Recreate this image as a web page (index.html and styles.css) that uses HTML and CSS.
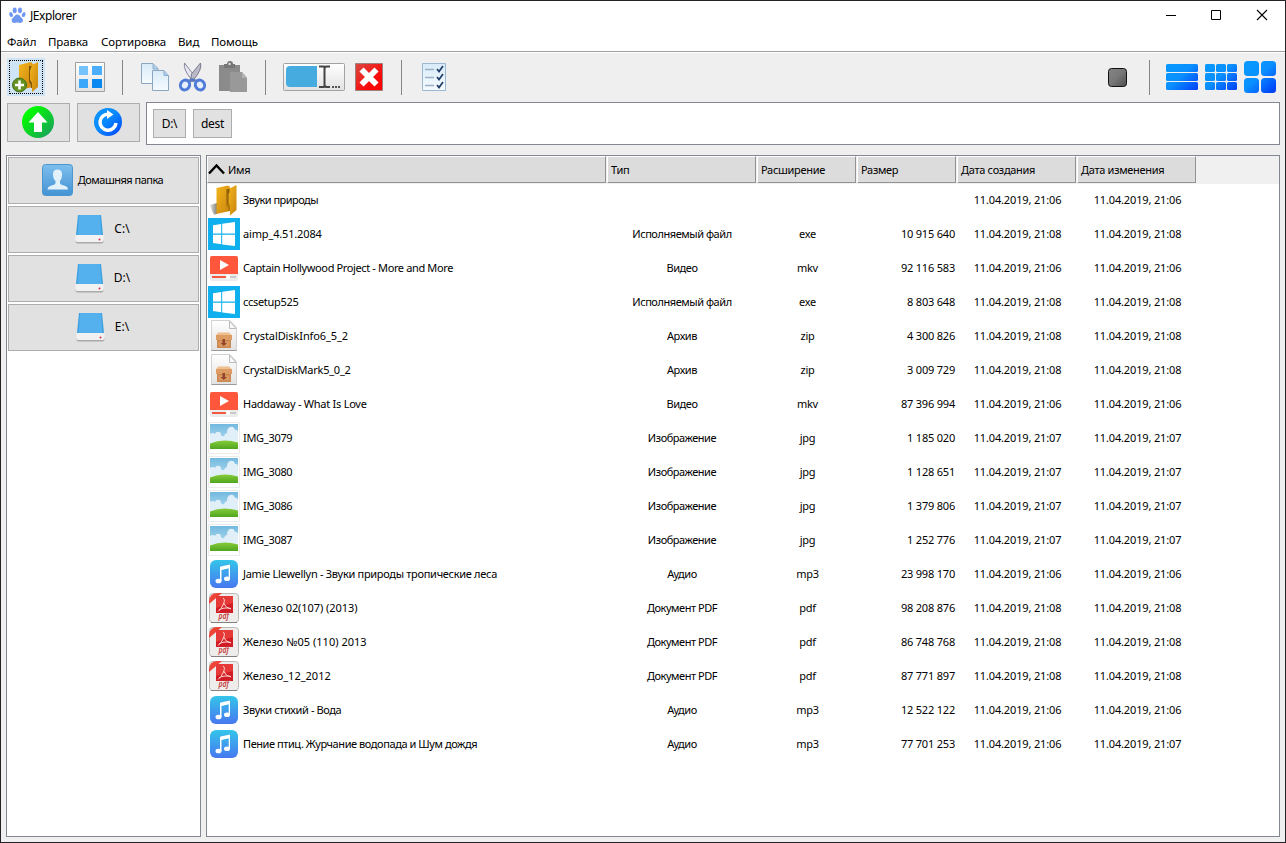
FILE: index.html
```html
<!DOCTYPE html>
<html lang="ru">
<head>
<meta charset="utf-8">
<title>JExplorer</title>
<link rel="stylesheet" href="styles.css">
</head>
<body>
<svg class="defs" width="0" height="0" aria-hidden="true">
  <defs>
    <linearGradient id="gBlue" x1="0" y1="0" x2="1" y2="1"><stop offset="0" stop-color="#0a94ff"/><stop offset=".45" stop-color="#0a8cff"/><stop offset="1" stop-color="#0040f8"/></linearGradient>
    <linearGradient id="gBlueU" gradientUnits="userSpaceOnUse" x1="4" y1="0" x2="32" y2="30"><stop offset="0" stop-color="#0799ff"/><stop offset=".45" stop-color="#0a90ff"/><stop offset="1" stop-color="#003cf8"/></linearGradient>
    <linearGradient id="gGold" x1="0" y1="0" x2="1" y2="1"><stop offset="0" stop-color="#f5b51c"/><stop offset="1" stop-color="#c8850e"/></linearGradient>
    <linearGradient id="gPage" x1="0" y1="0" x2="0" y2="1"><stop offset="0" stop-color="#d8ebf8"/><stop offset="1" stop-color="#f6fbff"/></linearGradient>
    <linearGradient id="gGreen" x1="0" y1="0" x2="1" y2="1"><stop offset=".2" stop-color="#00fb00"/><stop offset=".9" stop-color="#19a25a"/></linearGradient>
    <linearGradient id="gNote" x1="0" y1="0" x2="0" y2="1"><stop offset="0" stop-color="#34c5ea"/><stop offset="1" stop-color="#4777f0"/></linearGradient>
    <linearGradient id="gRed" x1="0" y1="0" x2="1" y2="1"><stop offset="0" stop-color="#d94a42"/><stop offset=".7" stop-color="#fa0808"/><stop offset="1" stop-color="#ff0000"/></linearGradient>
    <linearGradient id="gUser" x1="0" y1="0" x2="0" y2="1"><stop offset="0" stop-color="#7ebeed"/><stop offset="1" stop-color="#4393d4"/></linearGradient>
    <linearGradient id="gSky" x1="0" y1="0" x2="0" y2="1"><stop offset="0" stop-color="#72b9df"/><stop offset="1" stop-color="#c9e7f6"/></linearGradient>
    <linearGradient id="gGrass" x1="0" y1="0" x2="0" y2="1"><stop offset="0" stop-color="#86cc3a"/><stop offset="1" stop-color="#4fa51e"/></linearGradient>
    <linearGradient id="gPaper" x1="0" y1="0" x2="0" y2="1"><stop offset="0" stop-color="#fff"/><stop offset="1" stop-color="#e2e2e2"/></linearGradient>
    <linearGradient id="gGray" x1="0" y1="0" x2="1" y2="1"><stop offset="0" stop-color="#858585"/><stop offset=".5" stop-color="#777"/><stop offset="1" stop-color="#4c4c4c"/></linearGradient>
    <linearGradient id="gShade" x1="0" y1="0" x2="1" y2="0"><stop offset="0" stop-color="#e4e4e2"/><stop offset="1" stop-color="#80807a"/></linearGradient>
  </defs>
  <symbol id="folder" viewBox="0 0 32 32">
    <path d="M2 21 9 19V30L6 30.500 4 27Z" fill="url(#gShade)"/>
    <path d="M8.500 4 20 1.500 22 3V27L8.500 30Z" fill="url(#gGold)"/>
    <path d="M18 5h4.500v22H20v-3l-2-3z" fill="#b57a0c"/>
    <path d="M19.500 5H22v17l-2.500-2z" fill="#80560b"/>
    <path d="M21.500 4.500 28.500 1V26L22 31.500V22L20.500 20V10L21.500 8Z" fill="url(#gGold)"/>
  </symbol>
  <symbol id="win" viewBox="0 0 32 32"><path fill="#10b0ee" d="M0 0h32v32H0z"/><path fill="#fff" d="M5 7.200 13.200 6V15.600H5zM14.200 5.800 27 4V15.600H14.200zM5 16.700h8.200v9.600L5 25.100zM14.200 16.700H27v11.300L14.200 26.400z"/></symbol>
  <symbol id="video" viewBox="0 0 32 32"><rect x="2" y="4" width="28" height="25" rx="2" fill="#ececec"/><path d="M2 22V6q0-2 2-2h24q2 0 2 2v16z" fill="#ff573c"/><path d="m12 8 9 5L12 18z" fill="#fff"/><path d="M4 24h16v2H4z" fill="#f15a40"/><path d="M20 24h8v2h-8z" fill="#c9c9c9"/><circle cx="20" cy="25" r="2.200" fill="#fff"/></symbol>
  <symbol id="zip" viewBox="0 0 32 32"><path d="M3.500 .5H22l6.500 7v23H3.500z" fill="url(#gPaper)" stroke="#d2d2d2"/><path d="M3.500 30.500h25" stroke="#999"/><path d="M21.500 1v7.500H28z" fill="#f9f9f9" stroke="#bbb"/><path d="M10 12.500h11l3 3H8z" fill="#efc08f"/><path d="M8 15h16v5H8z" fill="#dd9c63"/><path d="M9 20h14v8H9z" fill="#cc8850"/><path d="M10.500 21.500h11v5h-11z" fill="#d99a63"/><path d="M14.500 19v4h-2l3.300 3 3.200-3h-2v-4z" fill="#93442a"/></symbol>
  <symbol id="image" viewBox="0 0 32 32"><path d="M.5.500h31v31H.5z" fill="#fff" stroke="#ececec"/><path d="M2 2h28v25H2z" fill="url(#gSky)"/><path d="M2 12q3-2 5 0 1-3 4-2 2 0 2 3 1 2 3 1 1-3 3-3 0-5 3-6 4-1 5 3 2-1 3 2v13H2z" fill="#e1eff8"/><path d="M2 21.500Q15 16 30 20.500V27H2z" fill="url(#gGrass)"/></symbol>
  <symbol id="audio" viewBox="0 0 32 32"><rect x="2" y="2" width="28" height="28" rx="6" fill="url(#gNote)"/><path d="M12.500 8.500 22 6.500V10L12.500 12.200zM12 9h1.500v14H12zM20.700 7H22v13.500h-1.300z" fill="#fff"/><ellipse cx="10.500" cy="23" rx="3" ry="2.300" fill="#fff"/><ellipse cx="19" cy="20.800" rx="3" ry="2.300" fill="#fff"/></symbol>
  <symbol id="pdf" viewBox="0 0 32 32"><rect x="1.500" y="1.500" width="29" height="29" rx="3" fill="#eeedeb" stroke="#bdb9b6"/><path d="M3 30.500h26" stroke="#848080"/><path d="M1 10Q1 1 10 1h4L1 12z" fill="#ee4438"/><path d="M8 4h17v17H8z" fill="#d11c25"/><path d="M8 4h17v7L8 16z" fill="#e53a38"/><path d="M15 6q2.500 1 .5 6-2 5-5.500 7.500M15.500 11q2 5 7.500 6M11 18q4-3 12-1.500" fill="none" stroke="#ffd3ce"/></symbol>
  <symbol id="drive" viewBox="0 0 32 32"><path d="M4 2h23l2 20H2z" fill="#3b9fdf"/><path d="M5 2h21l1.500 20H3.500z" fill="#55b1ee"/><path d="M1.500 22h28v6q0 1.500-2 1.500h-24q-2 0-2-1.500z" fill="#f1f1f1"/><path d="M1.500 27v1q0 2.500 2 2.500h24q2 0 2-2.500v-1l-1 2h-26z" fill="#aaa"/><circle cx="25.500" cy="26.500" r="1" fill="#dd2948"/></symbol>
</svg>
<div class="window">
  <header class="titlebar">
    <svg class="paw" width="17" height="17" viewBox="0 0 17 17" fill="#6f98f2"><ellipse cx="5.700" cy="3.300" rx="2" ry="2.900"/><ellipse cx="11" cy="3.300" rx="2" ry="2.900"/><ellipse cx="2.100" cy="7.600" rx="1.700" ry="2.500" transform="rotate(-20 2 7.600)"/><ellipse cx="14.700" cy="7.600" rx="1.700" ry="2.500" transform="rotate(20 14.700 7.600)"/><path d="M8.300 7.500c2 0 2.600 1.600 4 3 1.500 1.200 1.900 2.400 1.500 3.800-.5 1.500-2 2.100-3.800 1.500-1.300-.4-2.200-.4-3.500 0-1.800.6-3.300 0-3.700-1.500-.4-1.400 0-2.600 1.400-3.800 1.400-1.400 2.200-3 4.100-3z"/></svg>
    <span class="title">JExplorer</span>
    <svg class="controls" width="103" height="12" viewBox="0 0 103 12" fill="none" stroke="#000"><path d="M0 6.500h10M45.500 1.500h9v9h-9z"/><path d="m91 1 10 10M101 1 91 11" stroke-width="1.100"/></svg>
  </header>
  <nav class="menu"><span class="m1">Файл</span><span class="m2">Правка</span><span class="m3">Сортировка</span><span class="m4">Вид</span><span class="m5">Помощь</span></nav>
  <div class="toolbar">
    <button class="newfolder"><svg width="30" height="32" viewBox="0 0 30 32"><path d="M8 4 20 1l2 2v23L8 29z" fill="url(#gGold)"/><path d="M18 5h4v22h-2v-3l-2-3z" fill="#80560b"/><path d="m21 4 6-3v25l-6 5v-9l-2-3V10z" fill="url(#gGold)"/><circle cx="8.500" cy="24" r="7" fill="#659222" stroke="#47701b"/><path d="M8.500 19.500v9M4 24h9" stroke="#fff" stroke-width="2.600"/></svg></button>
    <i class="sep s1"></i>
    <svg class="tiles" width="30" height="30" viewBox="0 0 30 30"><path d="M.5.500h29v29H.5z" fill="url(#gPaper)" stroke="#a0a0a0"/><path d="M4 4h9v9H4z" fill="#76c3fb"/><path d="M17 4h10v9H17z" fill="#4aaefa"/><path d="M4 17h9v9H4z" fill="#3aa7fb"/><path d="M17 17h10v9H17z" fill="#0a88f2"/></svg>
    <i class="sep s2"></i>
    <svg class="copy" width="30" height="31" viewBox="0 0 30 31"><g fill="url(#gPage)" stroke="#8ca6bf"><path d="M1.500 1.500H13l5 5v15H1.500z"/><path d="M12.500 8.500H24l4.500 5v15h-16z"/></g><path d="M13 2v5h5M24 9v4.500h4.500" fill="#a9cfef" stroke="#8faecb"/></svg>
    <svg class="cut" width="30" height="31" viewBox="0 0 30 31"><path d="M6.500 1Q5 7 13 17l3 3-1-8z" fill="#e8e8f1" stroke="#85859d"/><path d="M22.500 1q2 6-7 17l-3 2 1-8z" fill="#bbbbc8" stroke="#77778f"/><g fill="#e6eeff" stroke="#4f7bd8" stroke-width="3"><ellipse cx="7" cy="23" rx="4.500" ry="5" transform="rotate(30 7 23)"/><ellipse cx="22" cy="23" rx="4.500" ry="5" transform="rotate(-30 22 23)"/></g><path d="m10 18 4-2 5 2-4 2z" fill="#5879c0"/></svg>
    <svg class="paste" width="30" height="32" viewBox="0 0 30 32"><path d="M1 4h21v26H1z" fill="#8b8b8b"/><path d="M6 3h3q0-3 3-3t3 3h2v4H6z" fill="#777"/><circle cx="11.500" cy="3" r="1.200" fill="#ddd"/><path d="M12 11h12l5 6v14H12z" fill="#999"/><path d="M24 11v6h5z" fill="#b1b1b1"/></svg>
    <i class="sep s3"></i>
    <svg class="rename" width="62" height="28" viewBox="0 0 62 28"><rect x=".5" y=".5" width="61" height="27" rx="1" fill="url(#gPaper)" stroke="#a2a2a2"/><path d="M3 7q0-4 4-4h27v21H7q-4 0-4-4z" fill="#46ace0"/><path d="M36 3.500h5l1 1 1-1h4M36 24h5l1-1 1 1h4M41.500 4v20" fill="none" stroke="#444" stroke-width="2"/><path d="M49 24h2m1 0h2m1 0h2" stroke="#555" stroke-width="2"/></svg>
    <svg class="delete" width="28" height="28" viewBox="0 0 28 28"><path d="M.5.500h27v27H.5z" fill="url(#gRed)" stroke="#9c817f"/><path d="m6.500 6.500 15 15M21.500 6.500l-15 15" stroke="#fff" stroke-width="5.800"/></svg>
    <i class="sep s4"></i>
    <svg class="check" width="24" height="28" viewBox="0 0 24 28"><path d="M.5.500h23v27H.5z" fill="url(#gPage)" stroke="#9bb8d2"/><path d="M3 6.500h9M3 14.500h9M3 22.500h9" stroke="#9aafc4" stroke-width="1.500"/><path d="m15 6 2 2.500L21 3M15 14l2 2.500 4-5.500M15 22l2 2.500 4-5.500" fill="none" stroke="#203c68" stroke-width="1.700"/></svg>
    <svg class="stop" width="19" height="19" viewBox="0 0 19 19"><rect x=".5" y=".5" width="18" height="18" rx="3" fill="url(#gGray)" stroke="#111"/></svg>
    <i class="sep s5"></i>
    <svg class="view1" width="32" height="32" viewBox="0 0 32 32" fill="url(#gBlueU)"><rect y="3" width="32" height="8" rx="1.500"/><rect y="12" width="32" height="8" rx="1.500"/><rect y="21" width="32" height="8" rx="1.500"/></svg>
    <svg class="view2" width="32" height="32" viewBox="0 0 32 32" fill="url(#gBlueU)"><rect y="3" width="10" height="8" rx="1.500"/><rect x="11" y="3" width="10" height="8" rx="1.500"/><rect x="22" y="3" width="10" height="8" rx="1.500"/><rect y="12" width="10" height="8" rx="1.500"/><rect x="11" y="12" width="10" height="8" rx="1.500"/><rect x="22" y="12" width="10" height="8" rx="1.500"/><rect y="21" width="10" height="8" rx="1.500"/><rect x="11" y="21" width="10" height="8" rx="1.500"/><rect x="22" y="21" width="10" height="8" rx="1.500"/></svg>
    <svg class="view3" width="32" height="32" viewBox="0 0 32 32" fill="url(#gBlueU)"><rect width="15" height="15" rx="3.500"/><rect x="17" width="15" height="15" rx="3.500"/><rect y="17" width="15" height="15" rx="3.500"/><rect x="17" y="17" width="15" height="15" rx="3.500"/></svg>
  </div>
  <div class="navrow">
    <button class="btn navbtn"><svg width="32" height="32" viewBox="0 0 32 32"><circle cx="16" cy="16" r="16" fill="url(#gGreen)"/><path d="m16 6 9.500 10.500H20V26h-8v-9.500H6.500z" fill="#fff"/></svg></button>
    <button class="btn navbtn"><svg width="28" height="28" viewBox="0 0 28 28"><circle cx="14" cy="14" r="14" fill="url(#gBlue)"/><path d="M15 6.300A8 8 0 1 0 22 15" fill="none" stroke="#fff" stroke-width="3.500"/><path d="m13 2 6.500 4.500L13 11z" fill="#fff"/></svg></button>
    <div class="address"><button class="btn crumb c1">D:\</button><button class="btn crumb c2">dest</button></div>
  </div>
  <main class="content">
    <aside class="places">
      <button class="btn place home"><svg width="31" height="32" viewBox="0 0 31 32"><rect x=".5" y=".5" width="30" height="31" rx="3" fill="url(#gUser)" stroke="#4b96cf"/><path d="M11 10q0-4.500 4.500-4.500T20 10q0 5-2 7v2q0 1.500 4 2.500 4 1 4 4H5.500q0-3 4-4 4-1 4-2.500v-2Q11 15 11 10z" fill="#e3f1fb"/></svg><span>Домашняя папка</span></button>
      <button class="btn place"><svg width="32" height="32"><use href="#drive"/></svg><span>C:\</span></button>
      <button class="btn place"><svg width="32" height="32"><use href="#drive"/></svg><span>D:\</span></button>
      <button class="btn place"><svg width="32" height="32"><use href="#drive"/></svg><span>E:\</span></button>
    </aside>
    <section class="files">
      <div class="grid head">
        <div><svg width="17" height="12" viewBox="0 0 17 12"><path d="m1 10.500 7.500-8 7.500 8" fill="none" stroke="#000" stroke-width="2.400"/></svg>Имя</div><div>Тип</div><div>Расширение</div><div>Размер</div><div>Дата создания</div><div>Дата изменения</div>
      </div>
      <div id="rows"></div>
    </section>
  </main>
</div>
<script src="app.js"></script>
</body>
</html>
```
FILE: styles.css
```css
* { box-sizing: border-box; }
body { margin: 0; font: 11px "Noto Sans", "DejaVu Sans", sans-serif; color: #000; }
svg { display: block; flex: none; }
button { font: inherit; color: inherit; padding: 0; margin: 0; border-radius: 0; letter-spacing: inherit; }
.defs { position: absolute; }
.window { width: 1286px; height: 843px; border: 1px solid #242225; background: #efeff0; display: flex; flex-direction: column; overflow: hidden; }
.titlebar { height: 30px; background: #fff; display: flex; align-items: center; padding: 0 16px 2px 8px; font-size: 12px; letter-spacing: -.45px; }
.title { margin-left: 4px; }
.controls { margin-left: auto; }
.menu { height: 21px; display: flex; align-items: center; background: #fff; border-bottom: 1px solid #a0a0a0; padding-left: 6px; font-size: 11.5px; letter-spacing: -.1px; }
.menu span { white-space: nowrap; }
.m1 { width: 41px; }
.m2 { width: 53px; }
.m3 { width: 77px; }
.m4 { width: 33px; }
.toolbar { height: 50px; display: flex; align-items: center; padding: 0 9px 1px 6px; border-top: 1px solid #fff; }
.newfolder { width: 38px; height: 38px; background: #cfe4f5; border: 1px solid #cfe4f5; display: flex; align-items: center; justify-content: center; outline: 1px dotted #000; outline-offset: -3px; }
.sep { width: 1px; height: 35px; background: #858585; flex: none; }
.s1 { margin-left: 12px; }
.tiles { margin-left: 17px; }
.s2 { margin-left: 17px; }
.copy { margin-left: 17px; }
.cut { margin-left: 8px; }
.paste { margin-left: 10px; }
.s3 { margin-left: 17px; }
.rename { margin-left: 17px; }
.delete { margin-left: 10px; }
.s4 { margin-left: 18px; }
.check { margin-left: 20px; }
.stop { margin-left: auto; }
.s5 { margin-left: 22px; }
.view1 { margin-left: 16px; }
.view2, .view3 { margin-left: 7px; }
.navrow { height: 43px; display: flex; padding-left: 6px; }
.btn { background: #e1e1e1; border: 1px solid #adadad; display: flex; align-items: center; justify-content: center; }
.navbtn { width: 63px; height: 39px; margin: 1px 7px 0 0; padding: 0 2px 1px 0; }
.navbtn + .address { margin-left: -1px; }
.address { flex: 1; height: 43px; margin-right: 5px; background: #fff; border: 1px solid #828790; padding: 6px; display: flex; gap: 7px; }
.crumb { height: 29px; font-size: 12px; letter-spacing: -.3px; padding-bottom: 1px; }
.c1 { width: 33px; }
.c2 { width: 39px; }
.content { display: flex; gap: 5px; padding: 10px 5px 5px; flex: 1; min-height: 0; }
.places, .files { background: #fff; border: 1px solid #828790; }
.places { width: 195px; padding: 1px; display: flex; flex-direction: column; gap: 2px; }
.place { height: 47px; font-size: 12px; }
.home { font-size: 11px; letter-spacing: -.5px; padding: 0 2px 1px 0; }
.home span { margin-left: 5px; padding-bottom: 1px; }
.place + .place { padding: 0 3px 2px 0; gap: 8px; }
.files { flex: 1; }
.grid { display: grid; grid-template-columns: 400px 150px 100px 100px 120px 120px 1fr; }
.head { height: 28px; background: #f0f0f0; letter-spacing: -.3px; }
.head div { height: 27px; margin-right: 1px; padding-left: 3px; padding-bottom: 1px; background: #dcdcdc; border: 1px solid #929292; border-top-color: #fff; border-left-color: #fff; display: flex; align-items: center; }
.head div:first-child { padding-left: 0; }
.head svg { margin-right: 3px; }
#rows { margin-top: -1px; }
.row { height: 34px; align-items: center; letter-spacing: -.3px; white-space: nowrap; }
.row > * { text-align: center; }
.row > span, .name span { padding-bottom: 2px; }
.row .name { display: flex; align-items: center; gap: 3px; padding-left: 1px; text-align: left; }
.row .size { text-align: right; padding-right: 2px; letter-spacing: -.2px; }
.row .type { letter-spacing: -.45px; }
.row .ext { padding-left: 1px; }
.row .date { padding-left: 1px; letter-spacing: -.15px; }
.pdf-label { font-size: 8px; font-style: italic; font-weight: 600; letter-spacing: 0; fill: #c63c3c; }
```
FILE: app.js
```js
const types = {
  folder: ["", ""],
  win: ["Исполняемый файл", "exe"],
  video: ["Видео", "mkv"],
  zip: ["Архив", "zip"],
  image: ["Изображение", "jpg"],
  audio: ["Аудио", "mp3"],
  pdf: ["Документ PDF", "pdf"]
};
// kind, name, size, created minute, modified minute, name tracking in px
const files = [
  ["folder", "Звуки природы", "", "06", "06", -.53],
  ["win", "aimp_4.51.2084", "10 915 640", "08", "08", -.16],
  ["video", "Captain Hollywood Project - More and More", "92 116 583", "06", "06", -.37],
  ["win", "ccsetup525", "8 803 648", "08", "08", -.3],
  ["zip", "CrystalDiskInfo6_5_2", "4 300 826", "08", "08", -.1],
  ["zip", "CrystalDiskMark5_0_2", "3 009 729", "08", "08", -.25],
  ["video", "Haddaway - What Is Love", "87 396 994", "06", "06", -.26],
  ["image", "IMG_3079", "1 185 020", "07", "07", -.3],
  ["image", "IMG_3080", "1 128 651", "07", "07", -.3],
  ["image", "IMG_3086", "1 379 806", "07", "07", -.3],
  ["image", "IMG_3087", "1 252 776", "07", "07", -.3],
  ["audio", "Jamie Llewellyn - Звуки природы тропические леса", "23 998 170", "06", "06", -.3],
  ["pdf", "Железо 02(107) (2013)", "98 208 876", "08", "08", -.06],
  ["pdf", "Железо №05 (110) 2013", "86 748 768", "08", "08", .02],
  ["pdf", "Железо_12_2012", "87 771 897", "08", "08", 0],
  ["audio", "Звуки стихий - Вода", "12 522 122", "06", "06", -.4],
  ["audio", "Пение птиц. Журчание водопада и Шум дождя", "77 701 253", "06", "07", -.43]
];
const pdfLabel = '<text class="pdf-label" x="10.500" y="26.500" textLength="10.500" lengthAdjust="spacingAndGlyphs">pdf</text>';
document.getElementById("rows").innerHTML = files.map(([kind, name, size, made, changed, tracking]) => `
  <div class="grid row">
    <div class="name"><svg width="32" height="32"><use href="#${kind}"/>${kind === "pdf" ? pdfLabel : ""}</svg><span style="letter-spacing:${tracking}px">${name}</span></div>
    <span class="type">${types[kind][0]}</span><span class="ext">${types[kind][1]}</span>
    <span class="size">${size}</span>
    <span class="date">11.04.2019, 21:${made}</span><span class="date">11.04.2019, 21:${changed}</span>
  </div>`).join("");
```
